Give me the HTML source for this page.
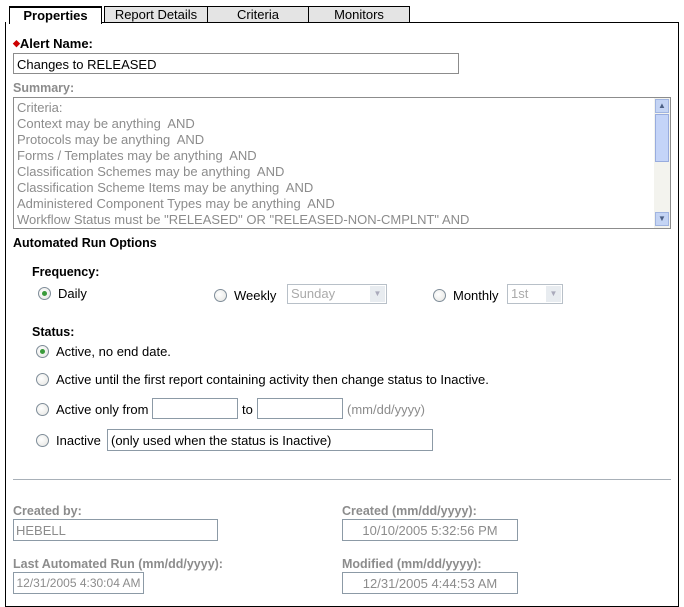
<!DOCTYPE html>
<html><head><style>
*{margin:0;padding:0;box-sizing:border-box}
body{width:684px;height:607px;background:#fff;font-family:"Liberation Sans",Arial,sans-serif;font-size:13px;color:#000;position:relative;overflow:hidden}
.a{position:absolute;white-space:nowrap}
.tab{position:absolute;top:6px;height:17px;border:1px solid #000;background:#e4e4e4;text-align:center;font-size:13px;line-height:15px}
.b{font-weight:bold;font-size:12.5px}
.g{color:#8c8c8c}
.box{position:absolute;border:1px solid #8c9aa6;background:#fff;white-space:nowrap;overflow:hidden}
.r{position:absolute;width:13px;height:13px;border-radius:50%;border:1px solid #7f8d99;background:radial-gradient(circle at 40% 40%,#fff,#e4e4e0)}
.r.on::after{content:"";position:absolute;left:3px;top:3px;width:5px;height:5px;border-radius:50%;background:#3a9a3a}
.sel{position:absolute;border:1px solid #b8c0c8;background:#fff;color:#aaa;padding-left:3px;line-height:18px}
.sel i{position:absolute;right:1px;top:1px;width:15px;height:16px;background:#e8ecf0;font-style:normal;text-align:center;font-size:8px;color:#aab;line-height:16px}
</style></head><body>
<div class="a" style="left:5px;top:22px;width:674px;height:585px;border:1px solid #000;border-top:none"></div>
<div class="a" style="left:101px;top:22px;width:578px;height:1px;background:#000"></div>
<div class="tab" style="left:9px;width:93px;background:#fff;border-bottom:none;height:18px;border-top:2px solid #000;font-weight:bold">Properties</div>
<div class="tab" style="left:104px;width:104px">Report Details</div>
<div class="tab" style="left:207px;width:102px">Criteria</div>
<div class="tab" style="left:308px;width:102px">Monitors</div>

<div class="a b" style="left:13px;top:36px;font-size:13px"><span style="color:#c00;font-size:9px;vertical-align:2px">◆</span>Alert Name:</div>
<div class="box" style="left:13px;top:53px;width:446px;height:21px;border-color:#8c8c8c;padding:3px 3px;font-size:13px">Changes to RELEASED</div>
<div class="a b g" style="left:13px;top:81px">Summary:</div>
<div class="box" style="left:13px;top:97px;width:658px;height:132px;border-color:#8c8c8c;color:#8c8c8c;padding:2px 3px;line-height:16px;font-size:13px">
Criteria:<br>Context may be anything&nbsp; AND<br>Protocols may be anything&nbsp; AND<br>Forms / Templates may be anything&nbsp; AND<br>Classification Schemes may be anything&nbsp; AND<br>Classification Scheme Items may be anything&nbsp; AND<br>Administered Component Types may be anything&nbsp; AND<br>Workflow Status must be "RELEASED" OR "RELEASED-NON-CMPLNT" AND
<div style="position:absolute;right:0;top:0;width:16px;height:130px;background:#f3f3ee">
<div style="position:absolute;left:1px;top:1px;width:14px;height:14px;background:#c4d4f4;border:1px solid #a0b4e0;font-size:8px;color:#4d6185;text-align:center;line-height:12px">▲</div>
<div style="position:absolute;left:1px;top:16px;width:14px;height:48px;background:#c4d4f8;border:1px solid #98acde"></div>
<div style="position:absolute;left:1px;top:114px;width:14px;height:14px;background:#c4d4f4;border:1px solid #a0b4e0;font-size:8px;color:#4d6185;text-align:center;line-height:12px">▼</div>
</div></div>

<div class="a b" style="left:13px;top:236px">Automated Run Options</div>
<div class="a b" style="left:32px;top:265px">Frequency:</div>
<div class="r on" style="left:38px;top:287px"></div><div class="a" style="left:58px;top:286px">Daily</div>
<div class="r" style="left:214px;top:289px"></div><div class="a" style="left:234px;top:288px">Weekly</div>
<div class="sel" style="left:287px;top:284px;width:100px;height:20px">Sunday<i>▼</i></div>
<div class="r" style="left:433px;top:289px"></div><div class="a" style="left:453px;top:288px">Monthly</div>
<div class="sel" style="left:507px;top:284px;width:56px;height:20px">1st<i>▼</i></div>

<div class="a b" style="left:32px;top:325px">Status:</div>
<div class="r on" style="left:36px;top:345px"></div><div class="a" style="left:56px;top:344px">Active, no end date.</div>
<div class="r" style="left:36px;top:373px"></div><div class="a" style="left:56px;top:372px">Active until the first report containing activity then change status to Inactive.</div>
<div class="r" style="left:36px;top:403px"></div><div class="a" style="left:56px;top:402px">Active only from</div>
<div class="box" style="left:152px;top:398px;width:86px;height:21px;border-color:#8c9aa6"></div>
<div class="a" style="left:242px;top:402px">to</div>
<div class="box" style="left:257px;top:398px;width:86px;height:21px"></div>
<div class="a g" style="left:347px;top:402px">(mm/dd/yyyy)</div>
<div class="r" style="left:36px;top:434px"></div><div class="a" style="left:56px;top:433px">Inactive</div>
<div class="box" style="left:107px;top:429px;width:326px;height:22px;padding:3px 3px">(only used when the status is Inactive)</div>

<div class="a" style="left:13px;top:479px;width:658px;height:1px;background:#a8b0b8"></div>
<div class="a b g" style="left:13px;top:504px">Created by:</div>
<div class="box g" style="left:13px;top:519px;width:205px;height:22px;padding:3px 2px">HEBELL</div>
<div class="a b g" style="left:342px;top:504px">Created (mm/dd/yyyy):</div>
<div class="box g" style="left:342px;top:519px;width:176px;height:22px;padding:3px 0;text-align:center">10/10/2005 5:32:56 PM</div>
<div class="a b g" style="left:13px;top:557px">Last Automated Run (mm/dd/yyyy):</div>
<div class="box g" style="left:13px;top:572px;width:131px;height:22px;padding:3px 0;text-align:center;font-size:12px">12/31/2005 4:30:04 AM</div>
<div class="a b g" style="left:342px;top:557px">Modified (mm/dd/yyyy):</div>
<div class="box g" style="left:342px;top:572px;width:176px;height:22px;padding:3px 0;text-align:center">12/31/2005 4:44:53 AM</div>
</body></html>
